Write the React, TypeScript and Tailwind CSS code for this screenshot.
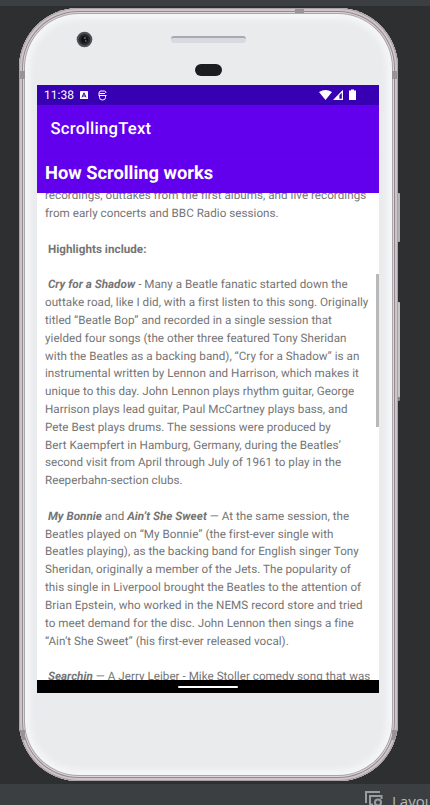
import React from "react";

const LINES: React.ReactNode[] = [
  "recordings, outtakes from the first albums, and live recordings",
  "from early concerts and BBC Radio sessions.",
  "",
  <b> Highlights include:</b>,
  "",
  <> <b className="italic">Cry for a Shadow</b> - Many a Beatle fanatic started down the</>,
  "outtake road, like I did, with a first listen to this song. Originally",
  "titled “Beatle Bop” and recorded in a single session that",
  "yielded four songs (the other three featured Tony Sheridan",
  "with the Beatles as a backing band), “Cry for a Shadow” is an",
  "instrumental written by Lennon and Harrison, which makes it",
  "unique to this day. John Lennon plays rhythm guitar, George",
  "Harrison plays lead guitar, Paul McCartney plays bass, and",
  "Pete Best plays drums. The sessions were produced by",
  "Bert Kaempfert in Hamburg, Germany, during the Beatles’",
  "second visit from April through July of 1961 to play in the",
  "Reeperbahn-section clubs.",
  "",
  <> <b className="italic">My Bonnie</b> and <b className="italic">Ain’t She Sweet</b> — At the same session, the</>,
  "Beatles played on “My Bonnie” (the first-ever single with",
  "Beatles playing), as the backing band for English singer Tony",
  "Sheridan, originally a member of the Jets. The popularity of",
  "this single in Liverpool brought the Beatles to the attention of",
  "Brian Epstein, who worked in the NEMS record store and tried",
  "to meet demand for the disc. John Lennon then sings a fine",
  "“Ain’t She Sweet” (his first-ever released vocal).",
  "",
  <> <b className="italic">Searchin</b> — A Jerry Leiber - Mike Stoller comedy song that was</>,
];

function StatusBar() {
  return (
    <div className="flex h-5 shrink-0 items-center bg-[#3700b3] pl-[7px] pr-[22px] text-white">
      <span className="w-[36px] text-[12px] leading-5">11:38</span>
      <svg width="8" height="8" viewBox="0 0 8 8">
        <rect width="8" height="8" rx="0.6" fill="#fff" />
        <path d="M2 6.4 4 1.8 6 6.4M2.8 5h2.4" fill="none" stroke="#3700b3" strokeWidth="1" />
      </svg>
      <svg width="9" height="11" viewBox="0 0 9 11" className="ml-[10px]" fill="none" stroke="#fff">
        <path d="M1 5V3Q1 1 3 1H6.500Q8 1 8 3M.5 5.500H8.500M1.500 3.500H7M1.500 5.500V7.500Q1.500 10 4.500 10T7.500 7.500V5.500" strokeWidth="1" />
      </svg>
      <svg width="38" height="12" viewBox="0 0 38 12" className="ml-auto" fill="#fff">
        <path d="M0 3Q6.500-1.200 13 3L6.500 11Z" />
        <path d="M24 .8V11H14ZM22.800 3.800 20.400 6.300V9.800H22.800Z" fillRule="evenodd" />
        <path d="M30 1.500h2V.5h3v1h2V11h-7Z" />
      </svg>
    </div>
  );
}

function Screen() {
  return (
    <div className="relative ml-[18px] mt-[77px] flex h-[608px] w-[342px] flex-col overflow-hidden bg-white [text-rendering:geometricPrecision]">
      <StatusBar />
      <div className="flex h-12 shrink-0 items-center bg-[#6200ee] pl-[13.500px] pt-[3px] text-[16.600px] font-medium tracking-[0.28px] text-white">
        ScrollingText
      </div>
      <div className="flex h-10 shrink-0 items-center border-t border-[#5d00e4] bg-[#6200ee] pl-2 text-[18.300px] font-bold text-white">
        How Scrolling works
      </div>
      <div className="min-h-0 flex-1 overflow-hidden pl-2">
        <div className="-mt-[5.800px] text-[11.650px] tracking-[0.03px] text-[#757575]">
          {LINES.map((line, i) => (
            <p key={i} className="h-[17.820px] whitespace-pre leading-[17.820px]">{line}</p>
          ))}
        </div>
      </div>
      <div className="flex h-[13px] shrink-0 items-center justify-center bg-black">
        <div className="h-[2px] w-[60px] rounded-full bg-white" />
      </div>
      <div className="absolute right-0 top-[189px] h-[153px] w-[3px] bg-[#b9b9b9]" />
    </div>
  );
}

function Phone() {
  return (
    <div className="relative ml-[19px] mt-[2px] h-[773px] w-[379px]">
      <div className="absolute right-[-2px] top-[185px] h-[49px] w-[4px] rounded-r-[1px] bg-[#b2b3b3]" />
      <div className="absolute right-[-2px] top-[294px] h-[99px] w-[4px] rounded-r-[1px] border-b-4 border-[#85887f] bg-[#c5c7c5]" />
      <div className="relative h-full overflow-hidden rounded-[60px] bg-[#eaebed] shadow-[inset_0_0_0_1px_#aaa1a6,inset_0_0_0_3px_#cdc5c9,inset_0_0_0_4px_#91898e,inset_0_0_0_5px_#ddd5d9,inset_0_0_0_6px_#aaa5a8,inset_0_0_6px_11px_#f5f6f8]">
        <div className="absolute left-[1px] top-[63px] h-[8px] w-[5px] bg-[#989397]" />
        <div className="absolute right-[1px] top-[63px] h-[8px] w-[5px] bg-[#989397]" />
        <div className="absolute left-[1px] top-[722px] h-[10px] w-[5px] bg-[#989397]" />
        <div className="absolute right-[1px] top-[722px] h-[10px] w-[5px] bg-[#989397]" />
        <div className="absolute left-[276px] top-[1px] h-[4px] w-[9px] bg-[#989397]" />
        <svg className="absolute left-[57px] top-[23px]" width="17" height="17" viewBox="0 0 17 17">
          <circle cx="8.500" cy="8.500" r="7.800" fill="#505257" />
          <circle cx="8.500" cy="8.500" r="5.800" fill="#292b2e" />
          <circle cx="8.500" cy="8.500" r="3.500" fill="#111316" />
          <path d="M8 6h2v2H8zM9 9h1.500v2H9z" fill="#58594a" />
        </svg>
        <div className="absolute left-[152px] top-[28px] h-[7px] w-[75px] rounded-[3px] border-t-2 border-[#a7a9b4] bg-[#d8dae0]" />
        <div className="absolute left-[176px] top-[56px] h-[12px] w-[27px] rounded-full bg-[#1b1d20]" />
        <Screen />
      </div>
    </div>
  );
}

export default function App() {
  return (
    <div className="flex h-[805px] w-[430px] flex-col overflow-hidden bg-[#2d2f30] font-['Roboto','Noto_Sans',sans-serif]">
      <div className="h-[6px] shrink-0 bg-[#3c3f41]" />
      <div className="h-[778px] shrink-0">
        <div className="flow-root">
          <Phone />
        </div>
      </div>
      <div className="flex h-[21px] shrink-0 overflow-hidden bg-[#3c3f41] pl-[365px] pt-[7px]">
        <svg width="18" height="18" viewBox="0 0 18 18" className="shrink-0" fill="none" stroke="#9a9da0" strokeWidth="2">
          <path d="M1 12V1H15M5 14V5H16.500V8M4 13.500H8" />
          <circle cx="13" cy="11.500" r="3" />
        </svg>
        <span className="ml-[9px] whitespace-nowrap font-['Open_Sans','Noto_Sans',sans-serif] text-[15px] leading-5 text-[#b5b7b9]">Layout</span>
      </div>
    </div>
  );
}
